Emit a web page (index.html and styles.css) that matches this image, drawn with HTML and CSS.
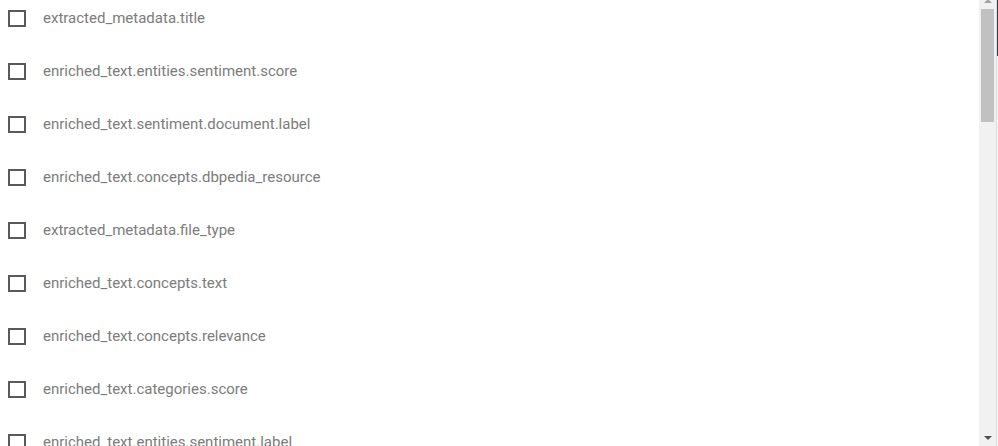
FILE: index.html
```html
<!DOCTYPE html>
<html>
<head>
<meta charset="utf-8">
<link rel="stylesheet" href="styles.css">
</head>
<body>
<div class="frame">
  <ul class="fields">
    <li class="field"><span class="box"></span><span class="label">extracted_metadata.title</span></li>
    <li class="field"><span class="box"></span><span class="label">enriched_text.entities.sentiment.score</span></li>
    <li class="field"><span class="box"></span><span class="label">enriched_text.sentiment.document.label</span></li>
    <li class="field"><span class="box"></span><span class="label">enriched_text.concepts.dbpedia_resource</span></li>
    <li class="field"><span class="box"></span><span class="label">extracted_metadata.file_type</span></li>
    <li class="field"><span class="box"></span><span class="label">enriched_text.concepts.text</span></li>
    <li class="field"><span class="box"></span><span class="label">enriched_text.concepts.relevance</span></li>
    <li class="field"><span class="box"></span><span class="label">enriched_text.categories.score</span></li>
    <li class="field"><span class="box"></span><span class="label">enriched_text.entities.sentiment.label</span></li>
  </ul>
  <div class="scrollbar">
    <div class="arrow up"></div>
    <div class="thumb"></div>
    <div class="track"></div>
    <div class="arrow down"></div>
  </div>
  <div class="edge">
    <div class="edge-dark"></div>
    <div class="edge-light"></div>
  </div>
</div>
</body>
</html>
```
FILE: styles.css
```css
html, body {
  margin: 0;
  padding: 0;
  background: #ffffff;
  overflow: hidden;
}
.frame {
  display: flex;
  height: 446px;
  width: 998px;
  overflow: hidden;
}
.fields {
  flex: 1;
  list-style: none;
  margin: 0;
  padding: 10px 0 0 8px;
  font-family: Roboto, "Liberation Sans", sans-serif;
  font-size: 15px;
  color: #7c7c7c;
}
.field {
  display: flex;
  align-items: center;
  height: 17px;
  margin-bottom: 36px;
}
.box {
  box-sizing: border-box;
  width: 18px;
  height: 17px;
  border: 2px solid #5a5a5a;
  flex: none;
}
.label {
  margin-left: 17px;
  line-height: 17px;
}
.scrollbar {
  width: 17px;
  flex: none;
  background: #f1f1f1;
  display: flex;
  flex-direction: column;
  align-items: center;
}
.arrow {
  width: 0;
  height: 0;
  border-left: 4px solid transparent;
  border-right: 4px solid transparent;
  flex: none;
}
.arrow.up {
  border-bottom: 4px solid #a3a3a3;
  margin-top: -1px;
  margin-bottom: 6px;
}
.arrow.down {
  border-top: 4px solid #505050;
  margin-bottom: 6px;
}
.thumb {
  width: 13px;
  height: 113px;
  background: #c1c1c1;
  flex: none;
}
.track {
  flex: 1;
}
.edge {
  width: 2px;
  flex: none;
  display: flex;
  flex-direction: column;
  border-left: 1px solid #dcdcdc;
  box-sizing: border-box;
}
.edge-dark {
  height: 56px;
  background: #2c3e50;
}
.edge-light {
  flex: 1;
  background: #f4f4f4;
}
```
